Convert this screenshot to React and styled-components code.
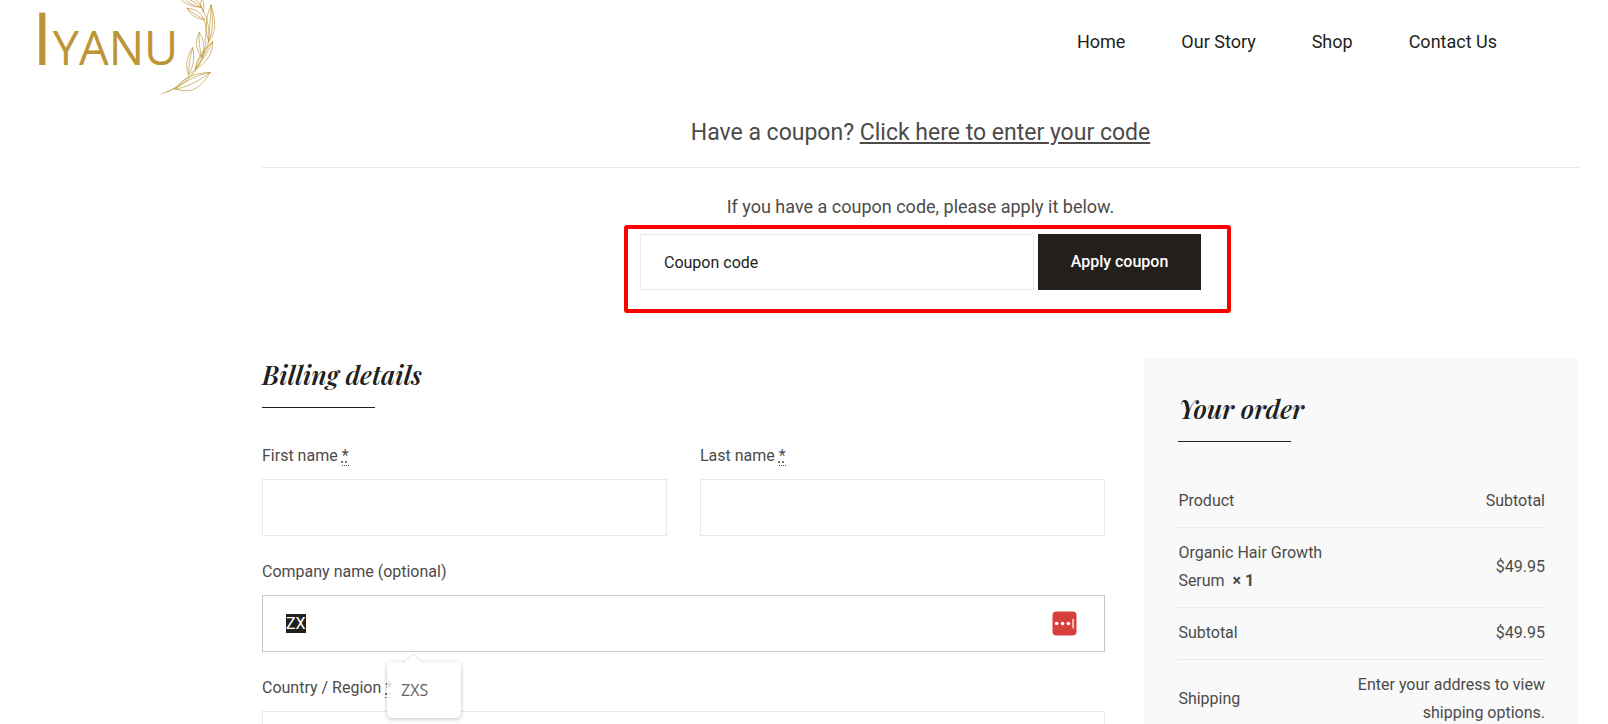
import React, { useEffect, useRef } from "react";
import styled, { createGlobalStyle } from "styled-components";

const INK = "#221f1c";
const TEXT = "#4c4b4a";
const LINE = "#e9e9e9";
const GOLD = "#bd9536";

const GlobalStyle = createGlobalStyle`
  *, *::before, *::after { box-sizing: border-box; }
  html { scrollbar-width: none; }
  body {
    margin: 0;
    background: #fff;
    color: ${TEXT};
    font: 400 16px/28px Roboto, "Liberation Sans", sans-serif;
  }
`;

const Header = styled.header`
  display: flex;
  justify-content: space-between;
  align-items: flex-start;
  padding: 0 111px 0 32px;
`;

const Logo = styled.a`
  display: flex;
  align-items: flex-start;
  height: 95px;
  color: ${GOLD};
  font-family: "Open Sans", "Noto Sans", sans-serif;
  font-weight: 500;
  text-decoration: none;
`;

const LogoText = styled.span`
  font-size: 47px;
  line-height: 74px;
`;

const LogoInitial = styled.span`
  font-size: 74px;
`;

const Branch = styled.svg`
  width: 57px;
  height: 95px;
  margin-left: -17px;
  fill: none;
  stroke: ${GOLD};
  stroke-width: 2;
  stroke-linecap: round;
`;

const Nav = styled.nav`
  display: flex;
  gap: 56px;
  padding-top: 28px;
`;

const NavLink = styled.a`
  color: ${INK};
  font-size: 18px;
  text-decoration: none;
`;

const Main = styled.main`
  margin: 0 29px 0 262px;
`;

const CouponNotice = styled.div`
  padding: 18px 0 14px;
  border-bottom: 1px solid ${LINE};
  font-size: 23px;
  line-height: 40px;
  text-align: center;
`;

const CouponLink = styled.a`
  color: inherit;
  text-decoration: underline;
`;

const CouponSection = styled.section`
  display: flex;
  flex-direction: column;
  align-items: center;
  gap: 13px;
  padding: 25px 0 68px;
`;

const CouponHint = styled.p`
  margin: 0;
  font-size: 18px;
`;

const CouponForm = styled.form`
  position: relative;
  display: flex;
  gap: 4px;
`;

const Highlight = styled.span`
  position: absolute;
  inset: -9px -30px -23px -16px;
  border: 4px solid #fe0000;
  border-radius: 3px;
  pointer-events: none;
`;

const TextInput = styled.input`
  display: block;
  width: 100%;
  height: 57px;
  padding: 0 23px;
  border: 1px solid ${(p) => (p.$active ? "#c7c7c7" : LINE)};
  border-radius: 0;
  outline: none;
  background: #fff;
  color: ${INK};
  font: inherit;
  line-height: normal;

  &::placeholder { color: ${INK}; opacity: 1; }
  &::selection { background: ${INK}; color: #fff; }
`;

const CouponInput = styled(TextInput)`
  width: 394px;
  height: 56px;
`;

const ApplyButton = styled.button`
  width: 163px;
  height: 56px;
  padding: 0;
  border: 0;
  background: ${INK};
  color: #fff;
  font: inherit;
  font-weight: 500;
`;

const Columns = styled.div`
  display: grid;
  grid-template-columns: 64fr 33fr;
  column-gap: 3%;
  align-items: start;
`;

const SectionTitle = styled.h3`
  margin: 0 0 34px;
  color: ${INK};
  font: italic 600 26px/34px "Playfair Display", "Liberation Serif", serif;

  &::after {
    content: "";
    display: block;
    width: 113px;
    margin-top: 15px;
    border-bottom: 1px solid ${INK};
  }
`;

const Fields = styled.div`
  display: grid;
  grid-template-columns: 1fr 1fr;
  gap: 22px 33px;
`;

const FieldBox = styled.div`
  position: relative;
  grid-column: ${(p) => (p.$wide ? "1 / -1" : "auto")};
`;

const Label = styled.label`
  display: block;
  margin-bottom: 9px;
`;

const Required = styled.abbr`
  border-bottom: 1px dotted ${TEXT};
  text-decoration: underline dotted;
`;

const VaultButton = styled.button`
  position: absolute;
  right: 28px;
  bottom: 16px;
  width: 25px;
  height: 25px;
  padding: 0;
  border: 0;
  background: none;

  svg { display: block; }
`;

const Suggestions = styled.div`
  position: absolute;
  z-index: 1;
  top: calc(100% + 10px);
  left: 125px;
  width: 74px;
  padding: 14px;
  border-radius: 5px;
  background: rgba(255, 255, 255, 0.8);
  box-shadow: 0 1px 4px rgba(0, 0, 0, 0.25);
  color: #666;
  font: 400 16px/28px "Open Sans", "Noto Sans", sans-serif;
`;

const Pointer = styled.svg`
  position: absolute;
  top: -9px;
  left: 16px;
  width: 20px;
  height: 10px;
  fill: #fff;
  stroke: #e4e4e4;
`;

const OrderBox = styled.aside`
  padding: 34px;
  background: #f9f9f9;
`;

const OrderTable = styled.table`
  width: 100%;
  border-collapse: separate;
  border-spacing: 0;
`;

const Cell = styled.td`
  width: ${(p) => (p.$end ? "54%" : "46%")};
  padding: 11px 0 12px;
  border-bottom: 1px solid ${LINE};
  font-weight: 400;
  text-align: ${(p) => (p.$end ? "right" : "left")};
  vertical-align: middle;
`;

const Quantity = styled.strong`
  display: inline-block;
  margin-left: 4px;
`;

function Field({ id, label, required, wide, children }) {
  return (
    <FieldBox $wide={wide}>
      <Label htmlFor={id}>
        {label}
        {required && (
          <>
            {" "}
            <Required title="required">*</Required>
          </>
        )}
      </Label>
      {children}
    </FieldBox>
  );
}

function LaurelBranch() {
  return (
    <Branch viewBox="425 0 171 285" aria-hidden="true">
      <path d="M428 281C462 270 484 252 506 230C532 206 550 178 562 146C574 112 570 66 552 32C546 18 540 8 530 0" />
      <path d="M440 277C478 264 512 238 534 204C550 178 556 150 560 124" />
      <path d="M468 268C486 238 516 220 573 217C556 244 532 276 496 272C486 271 478 270 468 268Z" />
      <path d="M468 268C500 262 540 244 573 217M474 264C500 240 534 226 573 217" />
      <path d="M508 222C496 200 502 168 520 143C526 170 524 200 508 222Z" />
      <path d="M508 222C508 196 512 170 520 143" />
      <path d="M528 208C532 174 552 146 580 125C580 156 566 188 528 208Z" />
      <path d="M528 208C546 184 564 160 580 125M530 200C540 170 560 148 580 125" />
      <path d="M548 172C530 152 526 122 540 97C554 120 558 146 548 172Z" />
      <path d="M548 172C540 146 538 122 540 97" />
      <path d="M568 124C556 90 560 48 575 15C588 54 594 96 568 124Z" />
      <path d="M568 124C570 90 574 54 575 15M568 124C582 96 582 54 575 15" />
      <path d="M554 58C534 60 516 46 503 25C528 26 546 38 554 58Z" />
      <path d="M554 58C538 50 520 40 503 25" />
      <path d="M546 22C524 22 500 14 484 -2M546 22C530 8 514 0 500 -6M546 22C522 16 506 10 496 -4" />
      <path d="M552 36C542 20 542 8 548 -4M552 36C556 20 554 8 548 -4" />
      <path d="M556 124C562 104 562 82 554 60" />
    </Branch>
  );
}

function VaultIcon() {
  return (
    <svg width="25" height="25" viewBox="0 0 25 25" aria-hidden="true">
      <rect x="0.5" y="0.5" width="24" height="24" rx="4" fill="#d73f3c" />
      <circle cx="4.7" cy="12.5" r="1.8" fill="#fff" />
      <circle cx="10.6" cy="12.5" r="1.8" fill="#fff" />
      <circle cx="16.4" cy="12.5" r="1.8" fill="#fff" />
      <rect x="20.4" y="7.8" width="1.3" height="9.6" rx="0.6" fill="#fff" />
    </svg>
  );
}

export default function App() {
  const companyRef = useRef(null);

  useEffect(() => {
    companyRef.current.focus({ preventScroll: true });
    companyRef.current.select();
  }, []);

  return (
    <>
      <GlobalStyle />
      <Header>
        <Logo href="#" aria-label="Iyanu">
          <LogoText>
            <LogoInitial>I</LogoInitial>YANU
          </LogoText>
          <LaurelBranch />
        </Logo>
        <Nav>
          <NavLink href="#">Home</NavLink>
          <NavLink href="#">Our Story</NavLink>
          <NavLink href="#">Shop</NavLink>
          <NavLink href="#">Contact Us</NavLink>
        </Nav>
      </Header>

      <Main>
        <CouponNotice>
          Have a coupon? <CouponLink href="#coupon">Click here to enter your code</CouponLink>
        </CouponNotice>

        <CouponSection id="coupon">
          <CouponHint>If you have a coupon code, please apply it below.</CouponHint>
          <CouponForm onSubmit={(e) => e.preventDefault()}>
            <CouponInput type="text" placeholder="Coupon code" aria-label="Coupon code" />
            <ApplyButton type="submit">Apply coupon</ApplyButton>
            <Highlight />
          </CouponForm>
        </CouponSection>

        <Columns>
          <section>
            <SectionTitle>Billing details</SectionTitle>
            <Fields>
              <Field id="first-name" label="First name" required>
                <TextInput id="first-name" type="text" />
              </Field>
              <Field id="last-name" label="Last name" required>
                <TextInput id="last-name" type="text" />
              </Field>
              <Field id="company" label="Company name (optional)" wide>
                <TextInput id="company" type="text" defaultValue="ZX" ref={companyRef} $active autoComplete="off" />
                <VaultButton type="button" aria-label="Fill from vault">
                  <VaultIcon />
                </VaultButton>
                <Suggestions>
                  <Pointer viewBox="0 0 20 10" aria-hidden="true">
                    <path d="M0 10L10 0.5L20 10" />
                  </Pointer>
                  ZXS
                </Suggestions>
              </Field>
              <Field id="country" label="Country / Region" required wide>
                <TextInput id="country" type="text" />
              </Field>
            </Fields>
          </section>

          <OrderBox>
            <SectionTitle>Your order</SectionTitle>
            <OrderTable>
              <thead>
                <tr>
                  <Cell as="th" scope="col">Product</Cell>
                  <Cell as="th" scope="col" $end>Subtotal</Cell>
                </tr>
              </thead>
              <tbody>
                <tr>
                  <Cell>
                    Organic Hair Growth Serum <Quantity>×&nbsp;1</Quantity>
                  </Cell>
                  <Cell $end>$49.95</Cell>
                </tr>
                <tr>
                  <Cell as="th" scope="row">Subtotal</Cell>
                  <Cell $end>$49.95</Cell>
                </tr>
                <tr>
                  <Cell as="th" scope="row">Shipping</Cell>
                  <Cell $end>Enter your address to view shipping options.</Cell>
                </tr>
              </tbody>
            </OrderTable>
          </OrderBox>
        </Columns>
      </Main>
    </>
  );
}
